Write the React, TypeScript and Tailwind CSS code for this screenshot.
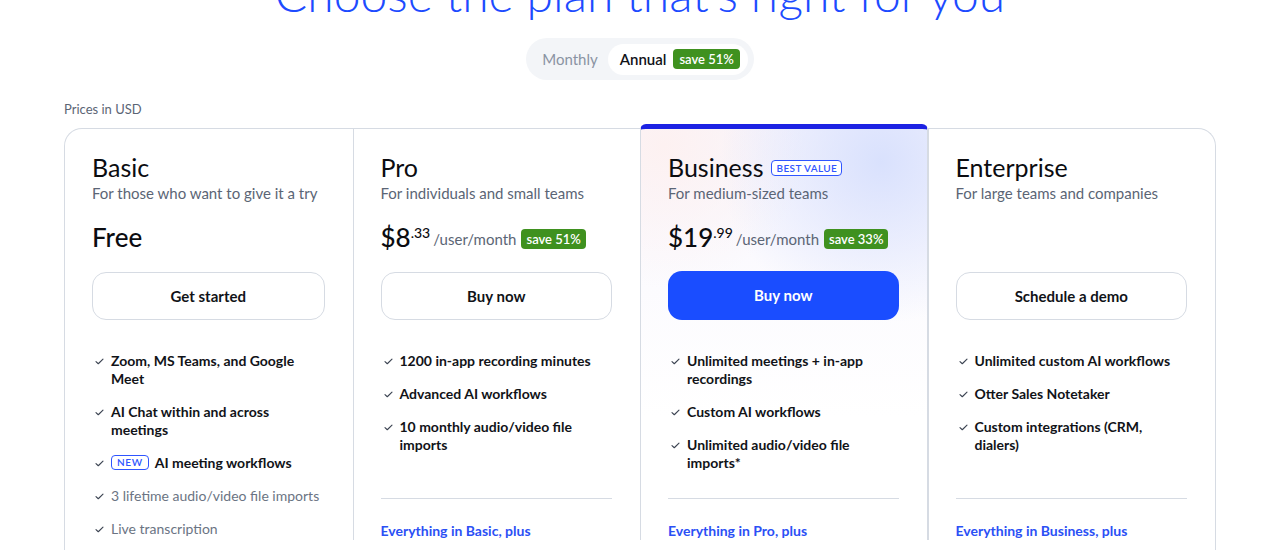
import React from "react";

type Feature = { text: string; bold?: boolean; isNew?: boolean };

type Plan = {
  name: string;
  tagline: string;
  price?: { whole: string; cents: string; save: string };
  free?: boolean;
  cta: string;
  primary?: boolean;
  bestValue?: boolean;
  features: Feature[];
  everything?: string;
};

const plans: Plan[] = [
  {
    name: "Basic",
    tagline: "For those who want to give it a try",
    free: true,
    cta: "Get started",
    features: [
      { text: "Zoom, MS Teams, and Google Meet", bold: true },
      { text: "AI Chat within and across meetings", bold: true },
      { text: "AI meeting workflows", bold: true, isNew: true },
      { text: "3 lifetime audio/video file imports" },
      { text: "Live transcription" },
    ],
  },
  {
    name: "Pro",
    tagline: "For individuals and small teams",
    price: { whole: "$8", cents: ".33", save: "save 51%" },
    cta: "Buy now",
    features: [
      { text: "1200 in-app recording minutes", bold: true },
      { text: "Advanced AI workflows", bold: true },
      { text: "10 monthly audio/video file imports", bold: true },
    ],
    everything: "Everything in Basic, plus",
  },
  {
    name: "Business",
    tagline: "For medium-sized teams",
    price: { whole: "$19", cents: ".99", save: "save 33%" },
    cta: "Buy now",
    primary: true,
    bestValue: true,
    features: [
      { text: "Unlimited meetings + in-app recordings", bold: true },
      { text: "Custom AI workflows", bold: true },
      { text: "Unlimited audio/video file imports*", bold: true },
    ],
    everything: "Everything in Pro, plus",
  },
  {
    name: "Enterprise",
    tagline: "For large teams and companies",
    cta: "Schedule a demo",
    features: [
      { text: "Unlimited custom AI workflows", bold: true },
      { text: "Otter Sales Notetaker", bold: true },
      { text: "Custom integrations (CRM, dialers)", bold: true },
    ],
    everything: "Everything in Business, plus",
  },
];

function Tick() {
  return (
    <svg viewBox="0 0 10 8" className="ml-[3px] mt-[6px] h-[7px] w-[9px] shrink-0" fill="none">
      <path d="M1 4.2 3.6 6.6 9 1.2" stroke="#3b4351" strokeWidth="1.3" strokeLinecap="round" strokeLinejoin="round" />
    </svg>
  );
}

function FeatureRow({ f }: { f: Feature }) {
  return (
    <li className="flex items-start gap-[7px]">
      <Tick />
      <span className={f.bold ? "font-bold text-[#111318]" : "text-[#6b7483]"}>
        {f.isNew && (
          <span className="mr-[6px] inline-block rounded-[4px] border border-[#2f55ff] px-[5px] align-[2px] text-[10px] font-semibold leading-[13px] tracking-[0.06em] text-[#2f55ff]">
            NEW
          </span>
        )}
        {f.text}
      </span>
    </li>
  );
}

function PlanColumn({ plan, first }: { plan: Plan; first: boolean }) {
  const wrap = plan.primary
    ? "relative -mt-[5px] border-t-[5px] border-t-[#1c22e3] rounded-t-[6px] border-x border-x-[#d6dbe3] bg-[radial-gradient(circle_at_84%_8%,#d9e1fd_0%,rgba(217,225,253,0)_36%),radial-gradient(circle_at_8%_4%,#fdf1f1_0%,rgba(253,241,241,0)_30%),linear-gradient(180deg,#f8f6fd_0%,#ffffff_70%)]"
    : first
      ? ""
      : "border-l border-[#d6dbe3]";
  return (
    <div className={`pl-[27px] pr-7 pt-[22px] ${wrap}`}>
      <div className="flex items-center gap-[8px]">
        <h3 className="text-[25px] leading-[32px] text-[#0b0c10]">{plan.name}</h3>
        {plan.bestValue && (
          <span className="mt-[2px] rounded-[4px] border border-[#2f55ff] bg-white px-[4px] text-[10px] font-semibold leading-[14px] tracking-[0.04em] text-[#2f55ff]">
            BEST VALUE
          </span>
        )}
      </div>
      <p className="text-[15px] leading-[20px] text-[#5b6575]">{plan.tagline}</p>
      <div className="mt-[16px] flex h-[36px] items-center">
        {plan.free && <span className="text-[26px] font-medium text-[#0b0c10]">Free</span>}
        {plan.price && (
          <div className="flex items-center">
            <span className="text-[26px] font-medium text-[#0b0c10]">{plan.price.whole}</span>
            <span className="mb-[10px] text-[14px] font-medium text-[#0b0c10]">{plan.price.cents}</span>
            <span className="ml-[3px] mt-[4px] text-[15px] text-[#5b6575]">/user/month</span>
            <span className="ml-[5px] mt-[4px] whitespace-nowrap rounded-[4px] bg-[#3f911f] px-[5px] text-[13px] font-semibold leading-[20px] text-white">
              {plan.price.save}
            </span>
          </div>
        )}
      </div>
      <button
        className={
          plan.primary
            ? "mt-[16px] h-[49px] w-full rounded-[14px] bg-[#1a4dff] text-[15px] font-bold text-white"
            : "mt-[17px] h-[48px] w-full rounded-[14px] border border-[#d6dbe3] bg-white text-[15px] font-bold text-[#111318]"
        }
      >
        {plan.cta}
      </button>
      <ul className={`mt-[32px] flex flex-col gap-[15px] text-[14px] leading-[18px] ${plan.everything ? "h-[146px]" : ""}`}>
        {plan.features.map((f) => (
          <FeatureRow key={f.text} f={f} />
        ))}
      </ul>
      {plan.everything && (
        <div className="border-t border-[#d6dbe3] pt-[23px] text-[14px] font-bold leading-[18px] text-[#2b50f5]">
          {plan.everything}
        </div>
      )}
    </div>
  );
}

export default function App() {
  return (
    <div className="h-[550px] overflow-hidden bg-white font-['Lato',sans-serif]">
      <h1 className="-mt-[36px] text-center text-[48px] font-light leading-[60px] text-[#1d4bff]">
        Choose the plan that’s right for you
      </h1>
      <div className="mt-[14px] flex justify-center">
        <div className="flex h-[42px] items-center rounded-full bg-[#f3f5f8] px-[6px]">
          <span className="px-[10px] text-[15px] text-[#8a93a3]">Monthly</span>
          <span className="flex h-[31px] items-center gap-[7px] rounded-full bg-white pl-[12px] pr-[8px]">
            <span className="text-[15px] font-semibold text-[#111318]">Annual</span>
            <span className="rounded-[4px] bg-[#3f911f] px-[6px] text-[13px] font-semibold leading-[20px] text-white">save 51%</span>
          </span>
        </div>
      </div>
      <div className="mx-auto mt-[20px] max-w-[1152px]">
        <p className="text-[13px] leading-[18px] text-[#5b6575]">Prices in USD</p>
        <div className="mt-[10px] grid grid-cols-4 rounded-t-[18px] border border-b-0 border-[#d6dbe3] pb-10">
          {plans.map((p, i) => (
            <PlanColumn key={p.name} plan={p} first={i === 0} />
          ))}
        </div>
      </div>
    </div>
  );
}
